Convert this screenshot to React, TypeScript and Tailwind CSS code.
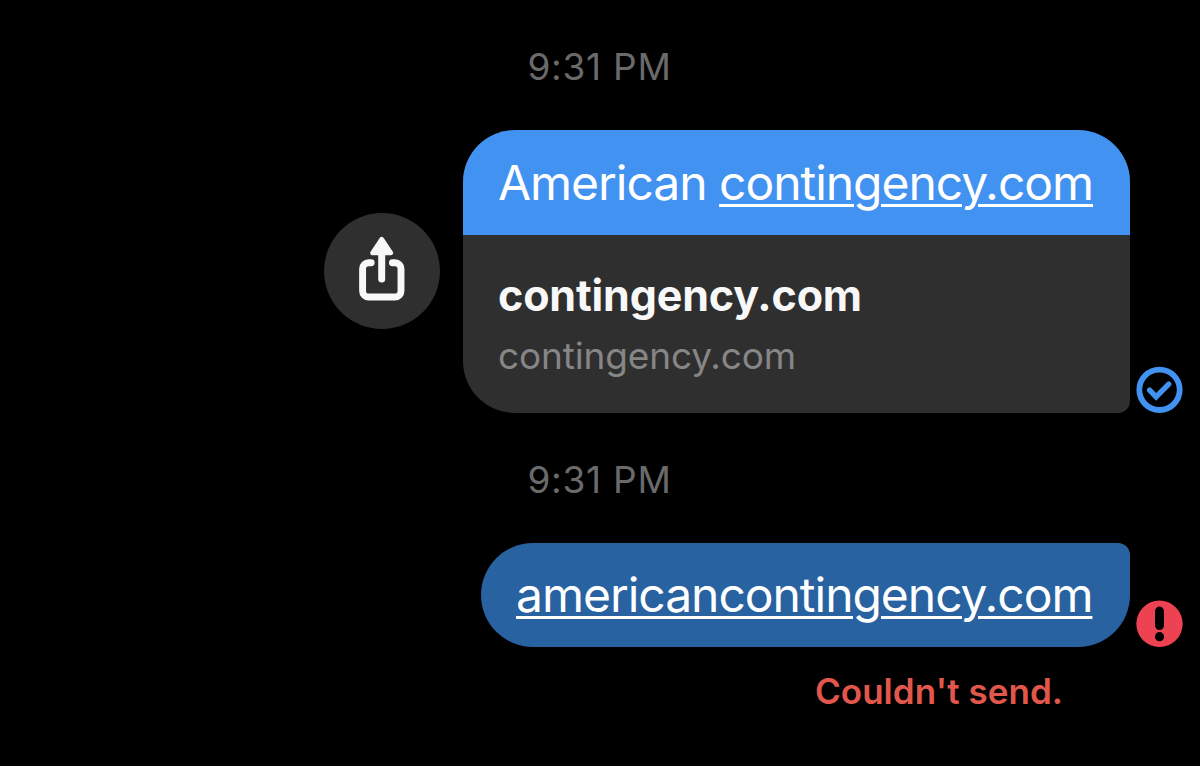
function Timestamp({ children }: { children: string }) {
  return (
    <div className="w-full pr-[1px] text-center text-[37px] leading-[48px] tracking-[0.75px] text-[#6a6a6a]">
      {children}
    </div>
  )
}

function ShareIcon() {
  return (
    <svg className="block size-[116px]" viewBox="0 0 116 116" fill="none">
      <path
        d="M47.2 49.7H44.6a6 6 0 0 0-6 6V78a6 6 0 0 0 6 6H71a6 6 0 0 0 6-6V55.7a6 6 0 0 0-6-6H68.4"
        stroke="#f8f8f8"
        strokeWidth="6.9"
        strokeLinecap="round"
      />
      <path d="M57.7 40V66" stroke="#f8f8f8" strokeWidth="7" strokeLinecap="round" />
      <path d="M57.7 26L67 40H48.4Z" fill="#f8f8f8" stroke="#f8f8f8" strokeWidth="4.4" strokeLinejoin="round" />
    </svg>
  )
}

function SentIcon() {
  return (
    <svg className="block size-[47px] shrink-0" viewBox="0 0 47 47" fill="none" stroke="#4292f2">
      <circle cx="23.5" cy="23.8" r="20.2" strokeWidth="5.8" />
      <path d="M13.6 24.2L20.1 30.9L32.7 18.1" strokeWidth="5.4" strokeLinecap="round" />
    </svg>
  )
}

function ErrorIcon() {
  return (
    <svg className="block size-[47px] shrink-0" viewBox="0 0 47 47">
      <circle cx="23.5" cy="23.8" r="23.2" fill="#ed4251" />
      <rect x="19" y="6.6" width="9" height="23.4" rx="4.5" fill="#000" />
      <circle cx="23.5" cy="36.7" r="4.6" fill="#000" />
    </svg>
  )
}

export default function App() {
  return (
    <main className="flex h-[766px] w-[1200px] flex-col overflow-hidden bg-black pt-[43px] [font-family:Inter,'Liberation_Sans',sans-serif]">
      <Timestamp>9:31 PM</Timestamp>

      <div className="mt-[39px] flex items-center justify-end pr-[17px]">
        <button className="mr-[23px] mb-px size-[116px] rounded-full bg-[#2f2f2f]">
          <ShareIcon />
        </button>
        <div className="h-[283px] w-[667px] overflow-hidden rounded-[52px] rounded-br-[12px] bg-[#2f2f2f]">
          <p className="h-[105px] bg-[#4292f2] pl-[35px] text-[48px] leading-[105px] font-normal tracking-[-1.03px] whitespace-nowrap text-white">
            American <a className="underline decoration-[3px] underline-offset-[4px]">contingency.com</a>
          </p>
          <div className="pt-[35px] pl-[35px]">
            <p className="text-[43px] leading-[50px] font-bold tracking-[-0.15px] text-[#f8f8f8]">contingency.com</p>
            <p className="mt-[11px] text-[37px] leading-[50px] tracking-[-0.15px] text-[#868686]">contingency.com</p>
          </div>
        </div>
        <div className="ml-[6px] self-end">
          <SentIcon />
        </div>
      </div>

      <div className="mt-[43px]">
        <Timestamp>9:31 PM</Timestamp>
      </div>

      <div className="mt-[39px] flex items-end justify-end gap-[6px] pr-[17px]">
        <div className="h-[104px] w-[649px] rounded-[52px] rounded-tr-[12px] bg-[#2862a1] pl-[35px]">
          <a className="text-[48px] leading-[104px] font-normal tracking-[-1.03px] whitespace-nowrap text-white underline decoration-[3px] underline-offset-[4px]">
            americancontingency.com
          </a>
        </div>
        <ErrorIcon />
      </div>

      <p className="mt-[20px] pr-[137px] text-right text-[35px] leading-[48px] font-semibold tracking-[0.05px] text-[#e2574c]">Couldn't send.</p>
    </main>
  )
}
